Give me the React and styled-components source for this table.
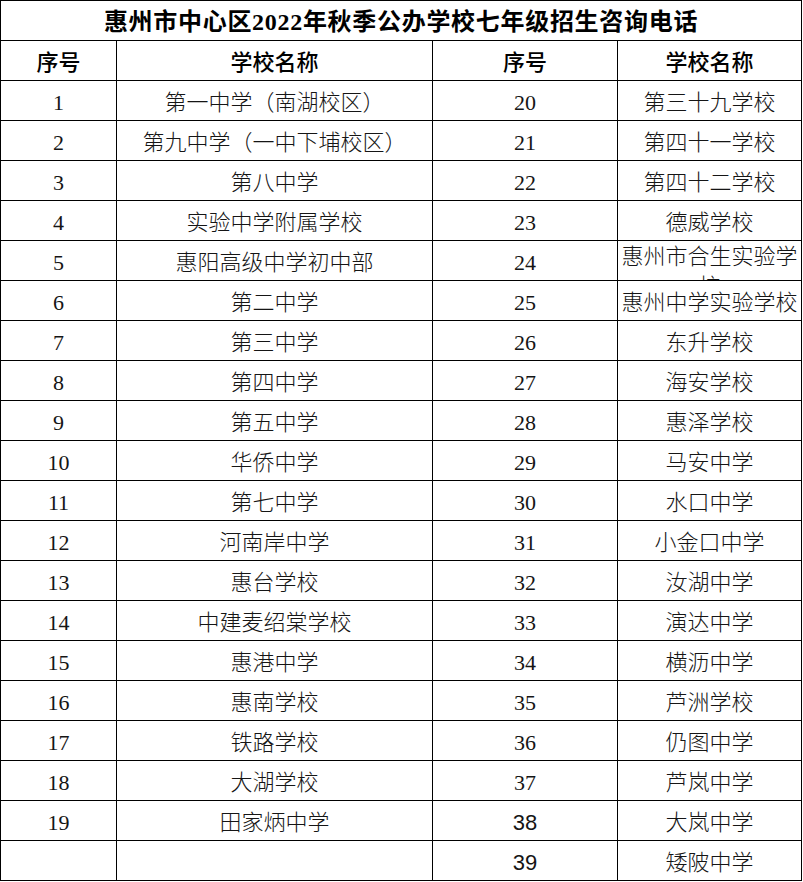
import React from "react";
import styled, { createGlobalStyle } from "styled-components";

const GlobalStyle = createGlobalStyle`
  html, body { margin: 0; padding: 0; background: #fff; }
  body { font-family: "Liberation Serif", "Noto Sans CJK SC", serif; }
`;

const Sheet = styled.div`
  display: grid;
  grid-template-columns: 116px 316px 185px 184px;
  grid-auto-rows: 40px;
  width: 802px;
  border-left: 1px solid #000;
  border-top: 1px solid #000;
  box-sizing: border-box;
  background: #fff;
`;

const Cell = styled.div`
  box-sizing: border-box;
  border-right: 1px solid #000;
  border-bottom: 1px solid #000;
  overflow: hidden;
  display: flex;
  justify-content: center;
  align-items: ${(p) => (p.$wrap ? "flex-start" : "center")};
  padding-top: ${(p) => (p.$wrap ? "1px" : "4px")};
  text-align: center;
  font-family: ${(p) =>
    p.$sans
      ? `"Liberation Sans", "Noto Sans CJK SC", sans-serif`
      : `"Liberation Serif", "Noto Sans CJK SC", serif`};
  font-size: 22px;
  font-weight: 300;
  line-height: 30px;
  color: #151515;
  word-break: break-all;
`;

const TitleCell = styled(Cell)`
  grid-column: 1 / -1;
  padding-top: 2px;
  font-size: 24px;
  font-weight: 700;
  letter-spacing: 0.7px;
  color: #000;
`;

const HeadCell = styled(Cell)`
  font-weight: 500;
  color: #000;
`;

const left = [
  "第一中学（南湖校区）",
  "第九中学（一中下埔校区）",
  "第八中学",
  "实验中学附属学校",
  "惠阳高级中学初中部",
  "第二中学",
  "第三中学",
  "第四中学",
  "第五中学",
  "华侨中学",
  "第七中学",
  "河南岸中学",
  "惠台学校",
  "中建麦绍棠学校",
  "惠港中学",
  "惠南学校",
  "铁路学校",
  "大湖学校",
  "田家炳中学",
];

const right = [
  "第三十九学校",
  "第四十一学校",
  "第四十二学校",
  "德威学校",
  "惠州市合生实验学校",
  "惠州中学实验学校",
  "东升学校",
  "海安学校",
  "惠泽学校",
  "马安中学",
  "水口中学",
  "小金口中学",
  "汝湖中学",
  "演达中学",
  "横沥中学",
  "芦洲学校",
  "仍图中学",
  "芦岚中学",
  "大岚中学",
  "矮陂中学",
];

export default function App() {
  const rows = right.map((name, i) => ({
    ln: i < left.length ? String(i + 1) : "",
    lname: i < left.length ? left[i] : "",
    rn: String(i + 20),
    rname: name,
  }));
  return (
    <>
      <GlobalStyle />
      <Sheet>
        <TitleCell>惠州市中心区2022年秋季公办学校七年级招生咨询电话</TitleCell>
        <HeadCell>序号</HeadCell>
        <HeadCell>学校名称</HeadCell>
        <HeadCell>序号</HeadCell>
        <HeadCell>学校名称</HeadCell>
        {rows.map((r, i) => (
          <React.Fragment key={i}>
            <Cell>{r.ln}</Cell>
            <Cell>{r.lname}</Cell>
            <Cell $sans={i >= 18}>{r.rn}</Cell>
            <Cell $wrap={r.rname.length > 8}>{r.rname}</Cell>
          </React.Fragment>
        ))}
      </Sheet>
    </>
  );
}
